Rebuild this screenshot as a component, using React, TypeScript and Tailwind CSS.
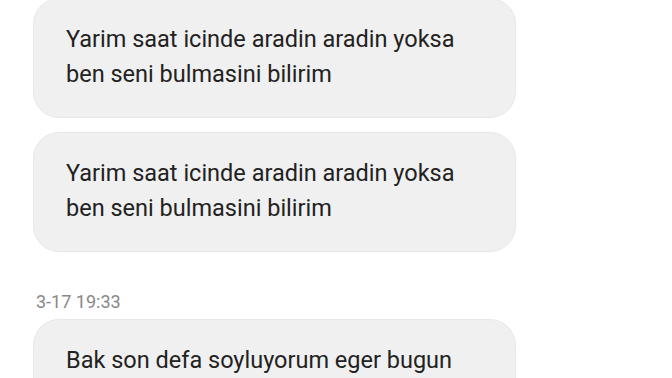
export default function App() {
  const msg = 'Yarim saat icinde aradin aradin yoksa ben seni bulmasini bilirim';
  return (
    <div className="h-[378px] w-[672px] overflow-hidden bg-white font-['Roboto',sans-serif]">
      <div className="-mt-[2px] flex flex-col pl-[33px]">
        <div className="w-[483px] rounded-[26px] border border-[#e8e8e8] bg-[#f0f0f0] px-[32px] pt-[23px] pb-[25px] text-[23.5px] leading-[35px] text-[#222]">
          {msg}
        </div>
        <div className="mt-[14px] w-[483px] rounded-[26px] border border-[#e8e8e8] bg-[#f0f0f0] px-[32px] pt-[23px] pb-[25px] text-[23.5px] leading-[35px] text-[#222]">
          {msg}
        </div>
        <div className="mt-[38px] pl-[3px] text-[18px] leading-[24px] text-[#888]">3-17 19:33</div>
        <div className="mt-[5px] w-[483px] rounded-[26px] border border-[#e8e8e8] bg-[#f0f0f0] px-[32px] pt-[23px] pb-[25px] text-[23.5px] leading-[35px] text-[#222]">
          Bak son defa soyluyorum eger bugun
        </div>
      </div>
    </div>
  );
}
